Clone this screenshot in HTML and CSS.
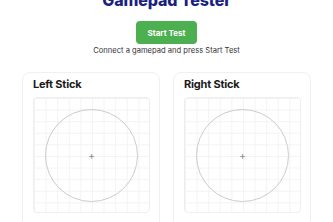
FILE: index.html
```html
<!DOCTYPE html>
<html>
<head>
<meta charset="utf-8">
<link rel="stylesheet" href="styles.css">
</head>
<body>
<header class="header">
  <h1 class="title">Gamepad Tester</h1>
  <button class="start-btn">Start Test</button>
  <p class="status">Connect a gamepad and press Start Test</p>
</header>
<main class="sticks">
  <section class="card">
    <h2 class="card-title">Left Stick</h2>
    <div class="stick-area">
      <div class="stick-ring"></div>
      <div class="stick-center">+</div>
    </div>
  </section>
  <section class="card">
    <h2 class="card-title">Right Stick</h2>
    <div class="stick-area">
      <div class="stick-ring"></div>
      <div class="stick-center">+</div>
    </div>
  </section>
</main>
</body>
</html>
```
FILE: styles.css
```css
html, body {
  margin: 0;
  padding: 0;
  background: #ffffff;
  font-family: Inter, "Noto Sans", sans-serif;
  overflow: hidden;
}
.header {
  display: flex;
  flex-direction: column;
  align-items: center;
}
.title {
  margin: -10px 0 0 0;
  font-size: 16px;
  line-height: 20px;
  font-weight: 800;
  color: #1a1f80;
  letter-spacing: -0.1px;
}
.start-btn {
  margin-top: 11px;
  width: 61px;
  height: 23px;
  border: none;
  border-radius: 4px;
  background: #4caf50;
  color: #ffffff;
  font-family: Inter, "Noto Sans", sans-serif;
  font-weight: 700;
  font-size: 8px;
  padding: 0;
}
.status {
  margin: 2px 0 0 0;
  font-size: 7.6px;
  line-height: 10px;
  color: #333333;
}
.sticks {
  display: grid;
  grid-template-columns: 138px 138px;
  column-gap: 13px;
  justify-content: center;
  margin-top: 16px;
}
.card {
  border: 1px solid #f0f0f0;
  border-radius: 8px;
  padding: 4px 10px 10px 10px;
  height: 200px;
  box-sizing: border-box;
}
.card-title {
  margin: 0;
  font-size: 11px;
  line-height: 14px;
  font-weight: 700;
  color: #1a1a1a;
  letter-spacing: -0.2px;
}
.stick-area {
  position: relative;
  margin-top: 6px;
  width: 117px;
  height: 116px;
  border: 1px solid #eeeeee;
  border-radius: 4px;
  box-sizing: border-box;
  background-color: #ffffff;
  background-image:
    linear-gradient(to right, #f3f3f3 1px, transparent 1px),
    linear-gradient(to bottom, #f3f3f3 1px, transparent 1px);
  background-size: 11.6px 11.6px;
  display: flex;
  align-items: center;
  justify-content: center;
}
.stick-ring {
  width: 93px;
  height: 93px;
  border: 1.5px solid #cccccc;
  border-radius: 50%;
  box-sizing: border-box;
}
.stick-center {
  position: absolute;
  left: 50%;
  top: 50%;
  transform: translate(-50%, -50%);
  font-size: 10px;
  line-height: 10px;
  color: #888888;
}
```
